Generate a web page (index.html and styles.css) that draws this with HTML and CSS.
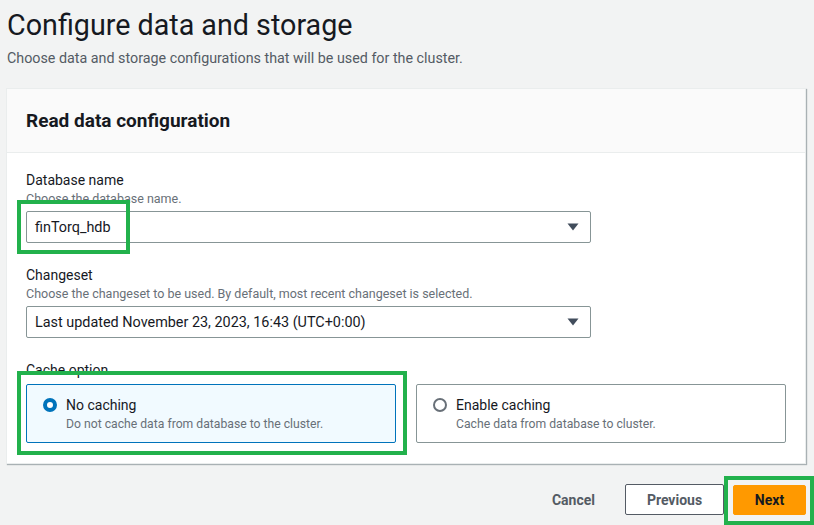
FILE: index.html
```html
<!DOCTYPE html>
<html lang="en">
<head>
<meta charset="utf-8">
<title>Configure data and storage</title>
<link rel="stylesheet" href="styles.css">
</head>
<body>
<div class="page">
  <header class="page-header">
    <h1 class="title">Configure data and storage</h1>
    <p class="subtitle">Choose data and storage configurations that will be used for the cluster.</p>
  </header>

  <section class="panel">
    <div class="panel-head">
      <h2 class="panel-title">Read data configuration</h2>
    </div>
    <div class="panel-body">
      <div class="field">
        <div class="label">Database name</div>
        <div class="desc">Choose the database name.</div>
        <div class="select">
          <span class="select-value">finTorq_hdb</span>
          <svg class="caret" width="12" height="8" viewBox="0 0 12 8"><path d="M0.5 0.5 H11.5 L6 7.5 Z" fill="#414d5c"/></svg>
        </div>
      </div>
      <div class="field">
        <div class="label">Changeset</div>
        <div class="desc">Choose the changeset to be used. By default, most recent changeset is selected.</div>
        <div class="select">
          <span class="select-value">Last updated November 23, 2023, 16:43 (UTC+0:00)</span>
          <svg class="caret" width="12" height="8" viewBox="0 0 12 8"><path d="M0.5 0.5 H11.5 L6 7.5 Z" fill="#414d5c"/></svg>
        </div>
      </div>
      <div class="field">
        <div class="label label-tight">Cache option</div>
        <div class="tiles">
          <div class="tile tile-selected">
            <span class="radio radio-on"></span>
            <div class="tile-text">
              <div class="tile-title">No caching</div>
              <div class="tile-desc">Do not cache data from database to the cluster.</div>
            </div>
          </div>
          <div class="tile">
            <span class="radio"></span>
            <div class="tile-text">
              <div class="tile-title">Enable caching</div>
              <div class="tile-desc">Cache data from database to cluster.</div>
            </div>
          </div>
        </div>
      </div>
    </div>
  </section>

  <div class="actions">
    <button class="btn-link">Cancel</button>
    <button class="btn btn-normal">Previous</button>
    <button class="btn btn-primary">Next</button>
  </div>

  <div class="mark mark-db"></div>
  <div class="mark mark-cache"></div>
  <div class="mark mark-next"></div>
</div>
</body>
</html>
```

FILE: styles.css
```css
* { box-sizing: border-box; }
html, body {
  margin: 0;
  padding: 0;
  background: #f2f3f3;
}
body {
  font-family: Roboto, "Open Sans", sans-serif;
  color: #16191f;
  width: 814px;
  height: 525px;
  overflow: hidden;
}
.page {
  position: relative;
  padding: 6px 8px 0 6px;
}
.page-header {
  padding-left: 1px;
}
.title {
  margin: 0;
  font-size: 28.7px;
  font-weight: 400;
  line-height: 38px;
  color: #16191f;
}
.subtitle {
  margin: 5px 0 0;
  font-size: 14.3px;
  line-height: 18px;
  color: #545b64;
}
.panel {
  margin-top: 21px;
  width: 800px;
  background: #fff;
  border: 1px solid #eaeded;
  box-shadow: 1px 1px 1px rgba(0, 28, 36, 0.3);
}
.panel-head {
  height: 64px;
  background: #fafafa;
  border-bottom: 1px solid #eaeded;
  padding: 0 19px;
  display: flex;
  align-items: center;
}
.panel-title {
  margin: 0;
  font-size: 19px;
  font-weight: 700;
  line-height: 22px;
}
.panel-body {
  padding: 16px 19px 20px;
  display: flex;
  flex-direction: column;
  gap: 21px;
}
.label {
  font-size: 14px;
  line-height: 22px;
  color: #16191f;
}
.desc {
  font-size: 12.5px;
  line-height: 16px;
  color: #687078;
}
.select {
  margin-top: 4px;
  width: 565px;
  height: 32px;
  border: 1px solid #879596;
  border-radius: 2px;
  display: flex;
  align-items: center;
  justify-content: space-between;
  padding: 0 11px 0 8px;
  font-size: 14.4px;
}
.caret {
  display: block;
}
.label-tight {
  margin-bottom: 3px;
}
.tiles {
  display: grid;
  grid-template-columns: 1fr 1fr;
  gap: 20px;
}
.tile {
  height: 59px;
  border: 1px solid #879596;
  border-radius: 2px;
  padding: 9px 16px;
  display: flex;
  gap: 9px;
}
.tile-selected {
  background: #f1faff;
  border-color: #0073bb;
}
.radio {
  flex: none;
  width: 14px;
  height: 14px;
  margin-top: 4px;
  border-radius: 50%;
  border: 2px solid #687078;
  background: #fff;
}
.radio-on {
  border: 4px solid #0073bb;
}
.tile-title {
  font-size: 14px;
  line-height: 22px;
}
.tile-desc {
  font-size: 12.2px;
  line-height: 16px;
  color: #687078;
}
.actions {
  margin-top: 20px;
  width: 800px;
  display: flex;
  justify-content: flex-end;
  align-items: center;
  gap: 9px;
}
.btn-link, .btn {
  font-family: inherit;
  font-size: 14px;
  font-weight: 700;
  line-height: 20px;
  cursor: pointer;
}
.btn-link {
  background: none;
  border: none;
  color: #545b64;
  padding: 4px 20px;
  margin-right: 1px;
}
.btn {
  height: 31px;
  border-radius: 2px;
  padding: 0 20px;
}
.btn-normal {
  background: #fff;
  border: 1px solid #545b64;
  color: #545b64;
  width: 99px;
}
.btn-primary {
  background: #ff9900;
  border: 1px solid #ff9900;
  color: #16191f;
  width: 73px;
  height: 30px;
}
.mark {
  position: absolute;
  border: 4px solid #22b14c;
  pointer-events: none;
}
.mark-db {
  left: 17px;
  top: 200px;
  width: 113px;
  height: 54px;
}
.mark-cache {
  left: 17px;
  top: 371px;
  width: 390px;
  height: 84px;
}
.mark-next {
  left: 724px;
  top: 476px;
  width: 90px;
  height: 49px;
}
```
